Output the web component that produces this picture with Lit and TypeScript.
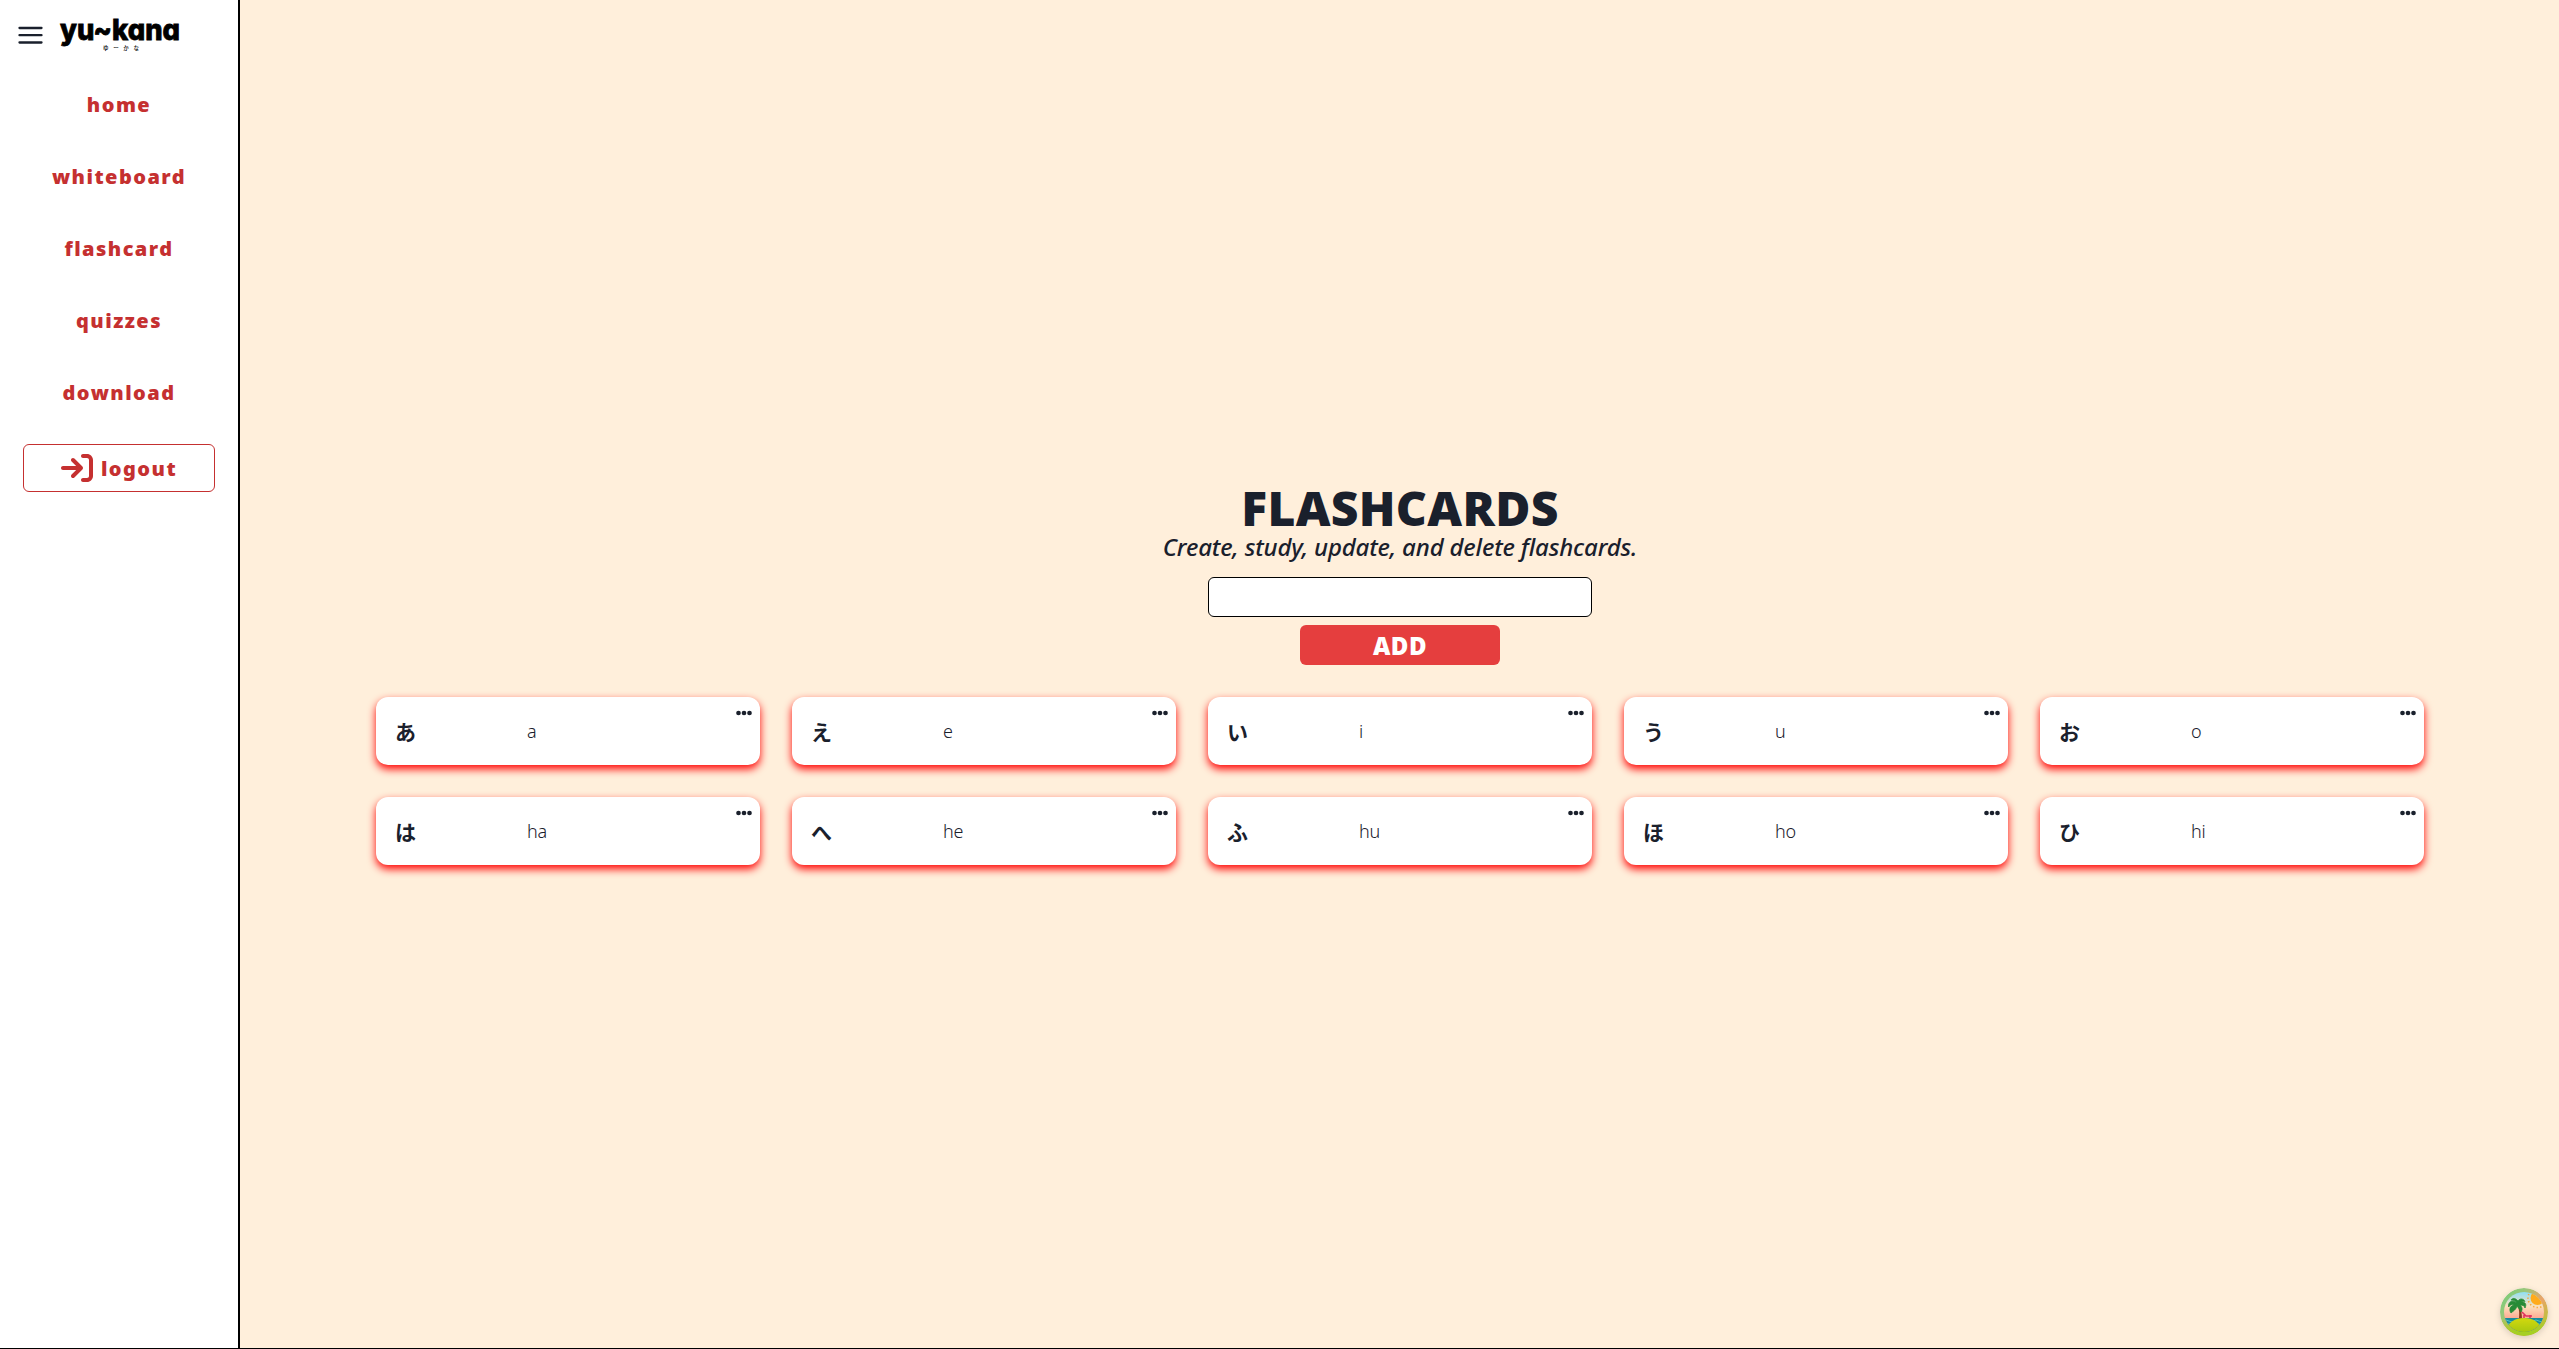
import { LitElement, html, css } from "lit";
import { customElement } from "lit/decorators.js";

const CARDS: [string, string][] = [
  ["あ", "a"], ["え", "e"], ["い", "i"], ["う", "u"], ["お", "o"],
  ["は", "ha"], ["へ", "he"], ["ふ", "hu"], ["ほ", "ho"], ["ひ", "hi"],
];

const LINKS = ["home", "whiteboard", "flashcard", "quizzes", "download"];

@customElement("side-bar")
class SideBar extends LitElement {
  static styles = css`
    :host { display: flex; flex-direction: column; box-sizing: border-box; width: 240px; background: #fff; border-right: 2px solid #000; color: #c53030; }
    .head { display: flex; height: 69px; padding-left: 18px; box-sizing: border-box; }
    .menu { width: 25px; height: 18px; margin-top: 26px; flex: none; }
    .logo { width: 124px; height: 46px; margin: 8px 0 0 16px; flex: none; overflow: visible; }
    .word { font: 800 29px Inter, Lato, sans-serif; font-feature-settings: "cv11"; fill: #000; stroke: #000; stroke-width: 0.8px; }
    .kana { font: 500 5.5px "Noto Sans CJK JP", sans-serif; fill: #000; }
    .nav { display: flex; flex-direction: column; }
    .link { height: 72px; line-height: 72px; text-align: center; }
    .link, .logout { font-family: "Noto Sans", "Open Sans", sans-serif; font-weight: 900; font-size: 20px; letter-spacing: 1.45px; }
    .logout { display: flex; align-items: center; justify-content: center; gap: 8px; box-sizing: border-box; width: 192px; height: 48px; margin: 15px 0 0 23px; border: 1px solid #c53030; border-radius: 6px; }
    .icon { width: 32px; height: 32px; }
  `;
  render() {
    return html`
      <div class="head">
        <svg class="menu" viewBox="0 0 25 18"><path d="M1.5 2H23.5M1.5 9.2H23.5M1.5 16.5H23.5" stroke="#1a202c" stroke-width="2.3" stroke-linecap="round" /></svg>
        <svg class="logo" viewBox="0 0 124 46">
          <text class="word" x="1" y="32" textLength="120" lengthAdjust="spacingAndGlyphs">yu~kana</text>
          <text class="kana" x="44" y="41.5" textLength="36">ゆーかな</text>
        </svg>
      </div>
      <div class="nav">${LINKS.map((l) => html`<div class="link">${l}</div>`)}</div>
      <div class="logout">
        <svg class="icon" viewBox="0 0 512 512" fill="currentColor"><path d="M352 96h64c17.7 0 32 14.3 32 32v256c0 17.7-14.3 32-32 32h-64c-17.7 0-32 14.3-32 32s14.3 32 32 32h64c53 0 96-43 96-96V128c0-53-43-96-96-96h-64c-17.7 0-32 14.3-32 32s14.3 32 32 32zm-9.4 182.6c12.5-12.5 12.5-32.8 0-45.3l-128-128c-12.5-12.5-32.8-12.5-45.3 0s-12.5 32.8 0 45.3L242.7 224H32c-17.7 0-32 14.3-32 32s14.3 32 32 32h210.7l-73.4 73.4c-12.5 12.5-12.5 32.8 0 45.3s32.8 12.5 45.3 0l128-128z" /></svg>
        <span>logout</span>
      </div>`;
  }
}

@customElement("app-root")
class AppRoot extends LitElement {
  static styles = css`
    :host { display: flex; box-sizing: border-box; width: 100%; height: 100vh; border-bottom: 1px solid #000; background: #ffefdb; color: #1a202c; font-family: "Noto Sans", "Open Sans", "Noto Sans CJK JP", sans-serif; }
    .main { flex: 1; display: flex; flex-direction: column; align-items: center; padding-top: 484px; padding-left: 1px; box-sizing: border-box; }
    .title { margin: 0; font-size: 48px; line-height: 48px; font-weight: 900; letter-spacing: 0.3px; }
    .sub { font-size: 24px; line-height: 30px; font-weight: 500; font-style: italic; white-space: nowrap; letter-spacing: -0.16px; }
    .field { box-sizing: border-box; width: 384px; height: 40px; margin: 15px 0 0; padding: 0 16px; border: 1px solid #000; border-radius: 6px; background: #fff; outline: none; }
    .add { width: 200px; height: 40px; margin: 8px 0 0; padding: 2px 0 0; border: 0; border-radius: 6px; background: #e53e3e; color: #fff; font: 900 24px "Noto Sans", "Open Sans", sans-serif; line-height: 38px; letter-spacing: 0.5px; }
    .grid { display: grid; grid-template-columns: repeat(5, 384px); gap: 32px; margin-top: 32px; }
    .card { position: relative; display: flex; align-items: center; box-sizing: border-box; height: 68px; padding-left: 19px; border-radius: 12px; background: #fff; box-shadow: 0 4px 8px red; }
    .kana { width: 132px; font-family: "Noto Sans CJK JP", sans-serif; font-size: 21px; line-height: 30px; font-weight: 700; }
    .roma { font-size: 18px; font-weight: 350; letter-spacing: -0.3px; }
    .dots { position: absolute; right: 8px; top: 13px; width: 16px; height: 6px; }
    .badge { position: absolute; left: 2500px; top: 1288px; width: 48px; height: 48px; border-radius: 50%; filter: drop-shadow(0 2px 3px rgba(0, 0, 0, 0.15)); }
  `;
  render() {
    return html`
      <side-bar></side-bar>
      <div class="main">
        <h1 class="title">FLASHCARDS</h1>
        <div class="sub">Create, study, update, and delete flashcards.</div>
        <input class="field" />
        <button class="add">ADD</button>
        <div class="grid">
          ${CARDS.map(([k, r]) => html`<div class="card">
            <span class="kana">${k}</span><span class="roma">${r}</span>
            <svg class="dots" viewBox="0 0 16 6" fill="#1a202c"><circle cx="2.5" cy="3" r="2.35" /><circle cx="8" cy="3" r="2.35" /><circle cx="13.5" cy="3" r="2.35" /></svg>
          </div>`)}
        </div>
      </div>
      <svg class="badge" viewBox="0 0 48 48">
        <defs>
          <linearGradient id="ring" x1="0" y1="0.1" x2="1" y2="0.9"><stop offset="0" stop-color="#73cf78" /><stop offset="0.3" stop-color="#9bc67a" /><stop offset="0.6" stop-color="#eba368" /><stop offset="1" stop-color="#a6cf24" /></linearGradient>
          <linearGradient id="sky" x1="0" y1="0" x2="0" y2="1"><stop offset="0.08" stop-color="#8fe0f4" /><stop offset="0.38" stop-color="#fbe0bd" /><stop offset="0.7" stop-color="#ff9c86" /></linearGradient>
          <linearGradient id="sand" x1="0" y1="0" x2="0" y2="1"><stop offset="0" stop-color="#d3d80e" /><stop offset="1" stop-color="#8fbf10" /></linearGradient>
          <linearGradient id="low" x1="0" y1="0" x2="0" y2="1"><stop offset="0.6" stop-color="#a6cf24" stop-opacity="0" /><stop offset="0.9" stop-color="#a6cf24" /></linearGradient>
          <clipPath id="disc"><circle cx="24" cy="24" r="20" /></clipPath>
        </defs>
        <circle cx="24" cy="24" r="24" fill="url(#ring)" />
        <circle cx="24" cy="24" r="24" fill="url(#low)" />
        <g clip-path="url(#disc)">
          <rect width="48" height="48" fill="url(#sky)" />
          <circle cx="37.500" cy="10" r="7" fill="#ffab1c" />
          <circle cx="37.500" cy="10" r="9.500" fill="none" stroke="#f5a63a" stroke-width="1.600" stroke-dasharray="1.400 2.200" />
          <rect y="30" width="48" height="18" fill="#168b9c" />
          <path d="M3 33q3-2 6 0t6 0M33 33q3-2 6 0t6 0M3 36q3-2 6 0t6 0M33 36q3-2 6 0t6 0" stroke="#4cc3c5" stroke-width="1" fill="none" />
          <path d="M17 16q3.500 7 1.500 17h3.500q0-11-2.500-17z" fill="#8a3a1c" />
          <ellipse cx="24" cy="41" rx="16.500" ry="11" fill="url(#sand)" />
        </g>
        <path d="M17 15C12 11 8 14 8.500 19C11 16 13 16 14 17C9.500 18 9 22 11 25C13 23 16 22 17 18C18 20 20 21 21 24C23 21 22 19 20 17C23 17 24.500 18 25 20C27 16 25 13.500 21 14C22.500 13 24 13 25 13.500C23 10 19.500 10.500 18 13C15 9.500 12.500 10 11 12C14 12 16 13 17 15z" fill="#278b37" stroke="#278b37" stroke-width="0.8" />
        <path d="M22 24l4 4h6M24 30v-3M30 30v-3" stroke="#e0325e" stroke-width="1.600" fill="none" />
      </svg>`;
  }
}
